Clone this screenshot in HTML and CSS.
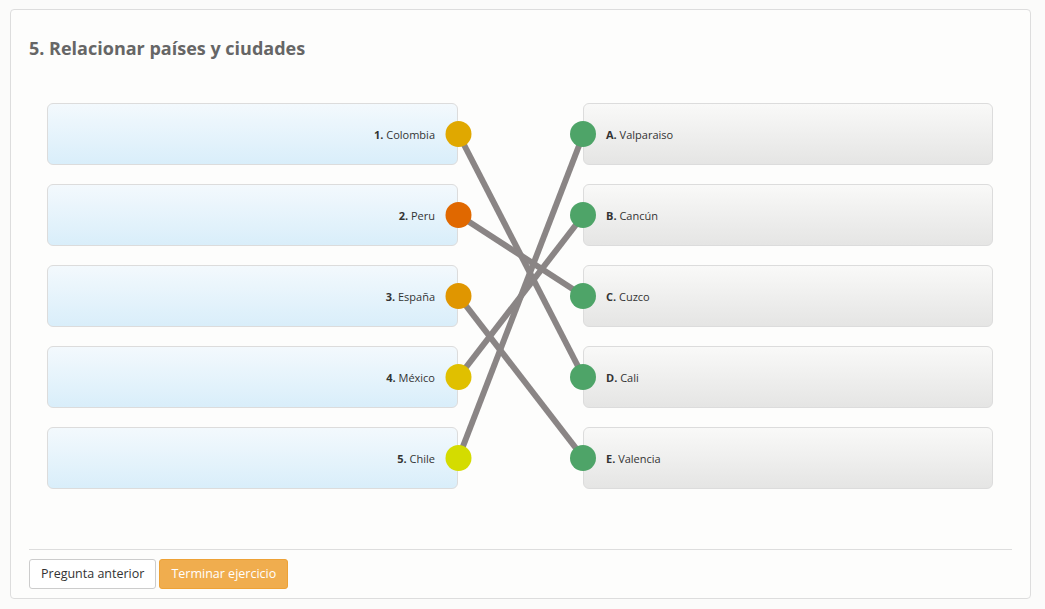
FILE: index.html
```html
<!DOCTYPE html>
<html lang="es">
<head>
<meta charset="utf-8">
<title>Relacionar países y ciudades</title>
<link rel="stylesheet" href="styles.css">
</head>
<body>
<div class="card">
  <h2 class="title">5. Relacionar países y ciudades</h2>
  <div class="match">
    <div class="col">
      <div class="item left"><b>1.</b>&nbsp;Colombia</div>
      <div class="item left"><b>2.</b>&nbsp;Peru</div>
      <div class="item left"><b>3.</b>&nbsp;España</div>
      <div class="item left"><b>4.</b>&nbsp;México</div>
      <div class="item left"><b>5.</b>&nbsp;Chile</div>
    </div>
    <div class="col">
      <div class="item right"><b>A.</b>&nbsp;Valparaiso</div>
      <div class="item right"><b>B.</b>&nbsp;Cancún</div>
      <div class="item right"><b>C.</b>&nbsp;Cuzco</div>
      <div class="item right"><b>D.</b>&nbsp;Cali</div>
      <div class="item right"><b>E.</b>&nbsp;Valencia</div>
    </div>
    <svg class="links" width="946" height="386" viewBox="0 0 946 386">
      <g stroke="#8a8585" stroke-width="6" stroke-linecap="butt">
        <line x1="411.5" y1="31" x2="536.5" y2="274"/>
        <line x1="411.5" y1="112" x2="536.5" y2="193"/>
        <line x1="411.5" y1="193" x2="536.5" y2="355"/>
        <line x1="411.5" y1="274" x2="536.5" y2="112"/>
        <line x1="411.5" y1="355" x2="536.5" y2="31"/>
      </g>
      <g>
        <circle cx="411.5" cy="31" r="13" fill="#e0a800"/>
        <circle cx="411.5" cy="112" r="13" fill="#e06800"/>
        <circle cx="411.5" cy="193" r="13" fill="#e09600"/>
        <circle cx="411.5" cy="274" r="13" fill="#e0c000"/>
        <circle cx="411.5" cy="355" r="13" fill="#d4dc00"/>
      </g>
      <g fill="#4ea468">
        <circle cx="536" cy="31" r="13"/>
        <circle cx="536" cy="112" r="13"/>
        <circle cx="536" cy="193" r="13"/>
        <circle cx="536" cy="274" r="13"/>
        <circle cx="536" cy="355" r="13"/>
      </g>
    </svg>
  </div>
  <div class="footer">
    <button class="btn btn-default">Pregunta anterior</button>
    <button class="btn btn-warning">Terminar ejercicio</button>
  </div>
</div>
</body>
</html>
```
FILE: styles.css
```css
html, body {
  margin: 0;
  padding: 0;
  background: #fbfbfa;
}
body {
  padding: 9px 14px 0 10px;
  font-family: "Open Sans", "Liberation Sans", sans-serif;
  color: #333;
}
.card {
  background: #fdfdfc;
  border: 1px solid #dddddd;
  border-radius: 4px;
  padding: 28px 18px 8px 18px;
  height: 590px;
  box-sizing: border-box;
}
.title {
  margin: 0;
  font-size: 18px;
  line-height: 20px;
  font-weight: 700;
  color: #666;
}
.match {
  position: relative;
  display: grid;
  grid-template-columns: 411px 410px;
  column-gap: 125px;
  margin: 45px 18px 0 18px;
  width: 946px;
}
.col {
  display: flex;
  flex-direction: column;
  gap: 19px;
}
.item {
  height: 62px;
  box-sizing: border-box;
  border: 1px solid #dcdcdc;
  border-radius: 6px;
  display: flex;
  align-items: center;
  font-size: 11px;
  color: #333;
}
.item b {
  font-weight: 700;
  color: #333;
}
.left {
  justify-content: flex-end;
  padding-right: 22px;
  background: linear-gradient(to bottom, #f3f9fd 0%, #d9eefa 100%);
}
.right {
  justify-content: flex-start;
  padding-left: 22px;
  background: linear-gradient(to bottom, #f9f9f8 0%, #e5e5e4 100%);
}
.links {
  position: absolute;
  left: 0;
  top: 0;
  overflow: visible;
}
.footer {
  margin-top: 60px;
  border-top: 1px solid #dddddd;
  padding-top: 9px;
  display: flex;
  gap: 3px;
}
.btn {
  font-family: "Open Sans", "Liberation Sans", sans-serif;
  font-size: 12.5px;
  line-height: 18px;
  height: 30px;
  padding: 0 11px;
  border-radius: 3px;
  white-space: nowrap;
  cursor: pointer;
}
.btn-default {
  background: #fff;
  border: 1px solid #cccccc;
  color: #333;
}
.btn-warning {
  background: #f0ad4e;
  border: 1px solid #eea236;
  color: #fff;
}
```
